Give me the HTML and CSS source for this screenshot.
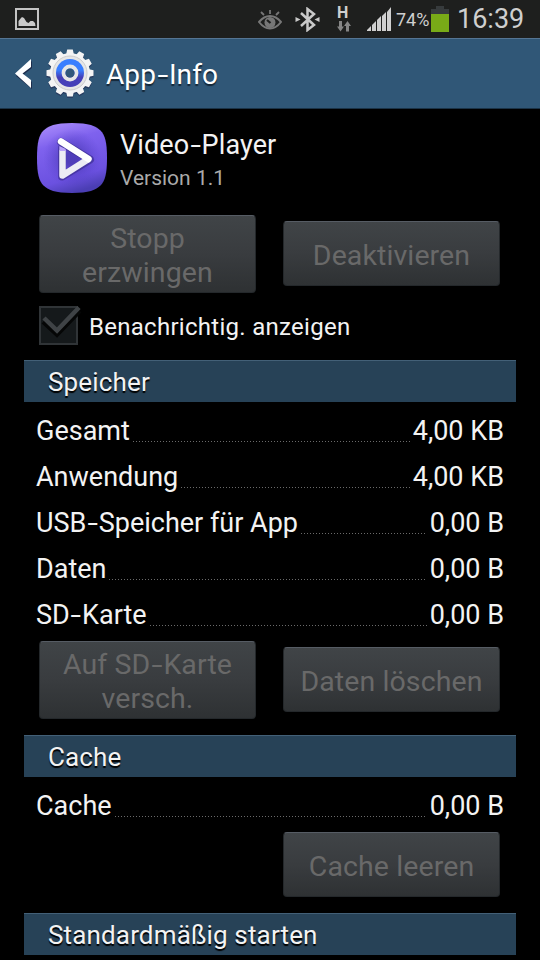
FILE: index.html
```html
<!DOCTYPE html>
<html lang="de">
  <head>
    <meta charset="UTF-8" />
    <meta name="viewport" content="width=device-width, initial-scale=1.0" />
    <title>App-Info</title>
    <link rel="stylesheet" href="styles.css">
  </head>
  <body>
    <div class="screen">
      <!-- Status bar -->
      <div class="status-bar">
        <svg class="picture-icon" width="24" height="22" viewBox="0 0 24 22">
          <rect x="1" y="1" width="22" height="20" fill="none" stroke="#c4c4c4" stroke-width="2" />
          <path d="M3.500 18v-5l2.500-3 1-1 2 1 2.500 4 2 1 2-2h2.500l2 2 .5 3z" fill="#c9c9c9" />
        </svg>
        <div class="status-icons">
          <svg class="eye-icon" width="24" height="22" viewBox="0 0 24 22">
            <path d="M1 13Q6 7 12 7t11 6q-5 6.500-11 6.500T1 13z" fill="#1e1f1e" stroke="#777" stroke-width="2" />
            <circle cx="12" cy="13.500" r="5.500" fill="#777" />
            <path d="M12.500 14l-3.500-3" stroke="#1e1f1e" stroke-width="2.200" />
            <path d="M12 5V1M6 6L3 3M18 6l3-3" stroke="#777" stroke-width="1.800" />
          </svg>
          <svg class="bluetooth-icon" width="25" height="25" viewBox="0 0 25 25">
            <path d="M6 6l13 12-6.500 5V2L19 7 6 19" fill="none" stroke="#c9c9c9" stroke-width="2.500" />
            <path d="M0.500 10l5 2.500-5 2.500zM24.500 10l-5 2.500 5 2.500z" fill="#c9c9c9" />
          </svg>
          <div class="network">
            <span class="network-type">H</span>
            <svg width="14" height="11" viewBox="0 0 14 11">
              <path d="M2 0h3v5.500h2l-3.500 5L0 5.500h2zM9 10.500h3V5h2L10.500 0 7 5h2z" fill="#858585" />
            </svg>
          </div>
          <svg class="signal-icon" width="24" height="24" viewBox="0 0 24 24">
            <path d="M0 24v-1l4-4v5zM5 24v-6l4-4v10zM10 24V13l4-4v15zM15 24V9l4-4v19zM20 24V5l4-5v24z" fill="#cfcfcf" />
          </svg>
          <span class="battery-level">74%</span>
          <svg class="battery-icon" width="18" height="26" viewBox="0 0 18 26">
            <path d="M5 0h8v3h5v5H0V3h5z" fill="#373b3d" />
            <rect y="8" width="18" height="18" fill="#79ab17" />
          </svg>
          <span class="clock">16:39</span>
        </div>
      </div>

      <!-- Action bar -->
      <div class="action-bar">
        <svg class="back-icon" width="18" height="32" viewBox="0 0 18 32">
          <path d="M17 2v7l-9 7 9 7v7L1 17z" fill="#1d2d4d" />
          <path d="M16 0v8L7.500 14.500 16 21v8L0 14.500z" fill="#fff" />
        </svg>
        <svg class="gear-icon" width="48" height="50" viewBox="-24 -24 48 50">
          <defs>
            <linearGradient id="gear-blue" x1="0" y1="0" x2="0" y2="1">
              <stop offset="0.400" stop-color="#397eff" />
              <stop offset="0.650" stop-color="#453fb8" />
            </linearGradient>
            <path id="tooth" d="M-4 -18L-2.800 -23.500H2.800L4 -18zM-4 18L-2.800 23.500H2.800L4 18z" />
            <g id="gear">
              <circle r="20" />
              <use href="#tooth" />
              <use href="#tooth" transform="rotate(30)" />
              <use href="#tooth" transform="rotate(60)" />
              <use href="#tooth" transform="rotate(90)" />
              <use href="#tooth" transform="rotate(120)" />
              <use href="#tooth" transform="rotate(150)" />
            </g>
          </defs>
          <use href="#gear" fill="#283c60" transform="translate(0 1.500)" />
          <use href="#gear" fill="#f4f4f4" />
          <circle r="17" fill="#e6e6e6" stroke="#cdcdcd" stroke-width="1" />
          <circle r="14" fill="url(#gear-blue)" />
          <circle r="6.500" fill="none" stroke="#e6e6e6" stroke-width="3.800" />
          <circle r="4.500" fill="#31577a" />
        </svg>
        <h1>App<span class="hyphen">-</span>Info</h1>
      </div>

      <div class="content">
        <div class="app-header">
          <svg class="app-icon" width="70" height="70" viewBox="0 0 70 70">
            <defs>
              <linearGradient id="purple" x1="0.200" y1="0" x2="0.500" y2="1">
                <stop offset="0" stop-color="#a98bfb" />
                <stop offset="0.300" stop-color="#7f62ee" />
                <stop offset="0.800" stop-color="#6b51e0" />
                <stop offset="1" stop-color="#4b3eb4" />
              </linearGradient>
              <radialGradient id="purple-shade">
                <stop offset="0.200" stop-color="#4637ae" stop-opacity="0.800" />
                <stop offset="1" stop-color="#5842cc" stop-opacity="0" />
              </radialGradient>
            </defs>
            <path d="M35 0C52 0 59 3 63.500 7.500S70 19 70 35s-2 23-6.500 27.500S52 70 35 70 11 67 6.500 62.500 0 51 0 35 2 12 6.500 7.500 18 0 35 0z" fill="url(#purple)" />
            <circle cx="35" cy="35" r="29" fill="url(#purple-shade)" />
            <path d="M25 25v28.500l28-17L24 19" fill="none" stroke="#372a88" stroke-width="8" stroke-linecap="round" stroke-linejoin="round" opacity="0.600" />
            <path d="M25.500 27v25.500L51.500 36" fill="none" stroke="#ececf4" stroke-width="6.500" stroke-linejoin="round" />
            <path d="M51.500 36L24 18.500" stroke="#fff" stroke-width="6.500" stroke-linecap="round" />
            <path d="M22.300 23l6.400 3v2h-6.400z" fill="#b9a2f8" />
          </svg>
          <div>
            <h2>Video<span class="hyphen">-</span>Player</h2>
            <p class="version">Version 1.1</p>
          </div>
        </div>

        <div class="button-row">
          <button class="btn btn-tall" disabled>Stopp<br />erzwingen</button>
          <button class="btn" disabled>Deaktivieren</button>
        </div>

        <div class="notify">
          <svg width="43" height="40" viewBox="0 0 43 40">
            <rect x="1" y="2" width="37" height="37" fill="#15191b" stroke="#303437" stroke-width="2" />
            <path d="M4 17l14 13L41 6" fill="none" stroke="#050606" stroke-width="4" />
            <path d="M5 13l13 12.500L40 2.500" fill="none" stroke="#3f4346" stroke-width="4.500" />
          </svg>
          <span>Benachrichtig. anzeigen</span>
        </div>

        <h3>Speicher</h3>
        <div class="rows">
          <div class="row"><span>Gesamt</span><i class="dots"></i><span>4,00 KB</span></div>
          <div class="row"><span>Anwendung</span><i class="dots"></i><span>4,00 KB</span></div>
          <div class="row"><span>USB<span class="hyphen">-</span>Speicher für App</span><i class="dots"></i><span>0,00 B</span></div>
          <div class="row"><span>Daten</span><i class="dots"></i><span>0,00 B</span></div>
          <div class="row"><span>SD<span class="hyphen">-</span>Karte</span><i class="dots"></i><span>0,00 B</span></div>
        </div>
        <div class="button-row">
          <button class="btn btn-tall" disabled>Auf SD<span class="hyphen">-</span>Karte<br />versch.</button>
          <button class="btn" disabled>Daten löschen</button>
        </div>

        <h3>Cache</h3>
        <div class="rows">
          <div class="row"><span>Cache</span><i class="dots"></i><span>0,00 B</span></div>
        </div>
        <div class="button-row button-row-end">
          <button class="btn" disabled>Cache leeren</button>
        </div>

        <h3>Standardmäßig starten</h3>
      </div>
    </div>
  </body>
</html>
```
FILE: styles.css
```css
body {
  font-family: Roboto, sans-serif;
  margin: 0;
  background-color: #000;
  color: #f3f3f3;
}

h1,
h2,
h3,
p {
  margin: 0;
  font-weight: normal;
}

svg {
  display: block;
  flex-shrink: 0;
}

.screen {
  width: 540px;
  height: 960px;
  overflow: hidden;
  white-space: nowrap;
}

/* wide hyphen, as in the system font */
.hyphen {
  display: inline-block;
  margin: 0 0.09em;
  transform: scaleX(1.4);
}

/* Status bar */
.status-bar {
  display: flex;
  justify-content: space-between;
  height: 38px;
  padding: 0 16px 0 15px;
  background-color: #1e1f1e;
  color: #cfcfcf;
}

.picture-icon {
  margin-top: 8px;
}

.status-icons {
  display: flex;
}

.eye-icon {
  margin: 9px 13px 0 0;
}

.bluetooth-icon {
  margin: 7px 17px 0 0;
}

.network {
  width: 14px;
  margin: 6px 16px 0 0;
}

.network-type {
  display: block;
  height: 15px;
  font-size: 16px;
  line-height: 13px;
  font-weight: bold;
}

.signal-icon {
  margin: 7px 5px 0 0;
}

.battery-level {
  width: 33px;
  font-size: 18px;
  line-height: 40px;
}

.battery-icon {
  margin: 6px 8px 0 2px;
}

.clock {
  width: 67px;
  font-size: 27px;
  line-height: 38px;
}

/* Action bar */
.action-bar {
  display: flex;
  height: 71px;
  box-sizing: border-box;
  padding-left: 15px;
  border-top: 1px solid #557593;
  border-bottom: 1px solid #1b3347;
  background-color: #305777;
}

.back-icon {
  margin-top: 20px;
}

.gear-icon {
  margin: 10px 12px 0 13px;
}

h1 {
  font-size: 28px;
  line-height: 72px;
  letter-spacing: 0.1px;
  color: #fff;
  text-shadow: 0 2px 1px #142636;
}

/* App name and icon */
.content {
  padding: 0 24px;
}

.app-header {
  display: flex;
  height: 105px;
  padding-left: 13px;
}

.app-icon {
  margin: 14px 13px 0 0;
}

h2 {
  margin-top: 19px;
  font-size: 27px;
  line-height: 34px;
  letter-spacing: 0.1px;
}

.version {
  font-size: 21px;
  line-height: 32px;
  color: #aaa;
}

/* Buttons */
.button-row {
  display: flex;
  align-items: center;
  justify-content: space-between;
  padding: 1px 16px 0 15px;
}

.btn {
  width: 217px;
  height: 65px;
  margin: 0 0 1px;
  padding: 4px 0 0;
  border: 1px solid #24282b;
  border-top-color: #565c64;
  border-radius: 4px;
  background: linear-gradient(#404447, #393c3f 50%, #2e3133);
  color: #696969;
  font-family: inherit;
  font-size: 28.5px;
  line-height: 34px;
  letter-spacing: 0.1px;
}

.btn-tall {
  height: 78px;
  margin: 0;
}

.button-row-end {
  justify-content: flex-end;
}

.button-row-end .btn {
  margin: 0;
}

/* Notification checkbox */
.notify {
  display: flex;
  height: 67px;
  padding-left: 15px;
  font-size: 24px;
  line-height: 68px;
  letter-spacing: 0.28px;
}

.notify svg {
  margin: 12px 7px 0 0;
}

/* Section titles */
h3 {
  height: 42px;
  box-sizing: border-box;
  padding-left: 24px;
  border-top: 1px solid #436077;
  background-color: #274257;
  font-size: 26px;
  line-height: 43px;
  letter-spacing: 0.15px;
  text-shadow: 0 2px 1px #000;
}

/* Storage values */
.rows {
  padding: 6px 12px 2px;
}

.row {
  display: flex;
  height: 46px;
  font-size: 27px;
  line-height: 46px;
}

.dots {
  flex: 1;
  height: 1px;
  margin: 33px 3px 0;
  background: repeating-linear-gradient(90deg, #6a6a6a 0 1px, #000 1px 3px);
}

.button-row + h3 {
  margin-top: 16px;
}
```
